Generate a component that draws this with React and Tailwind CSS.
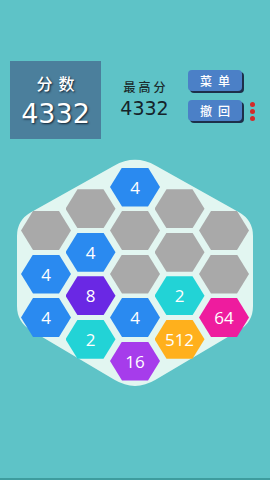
import React from "react";

const COLORS = {
  0: "bg-[#a9a9a9]",
  2: "bg-[#22d3d6]",
  4: "bg-[#2a8af0]",
  8: "bg-[#6a28e4]",
  16: "bg-[#a63ceb]",
  64: "bg-[#ee1c9e]",
  512: "bg-[#ffb01c]",
};

const columns = [
  { pad: "pt-[61px]", ml: "", cells: [0, 4, 4] },
  { pad: "pt-[39.25px]", ml: "-ml-[5.5px]", cells: [0, 4, 8, 2] },
  { pad: "pt-[17.5px]", ml: "-ml-[5.5px]", cells: [4, 0, 0, 4, 16] },
  { pad: "pt-[39.25px]", ml: "-ml-[5.5px]", cells: [0, 0, 2, 512] },
  { pad: "pt-[61px]", ml: "-ml-[5.5px]", cells: [0, 0, 64] },
];

function Hex({ v }) {
  return (
    <div
      className={`w-[50px] h-[39px] flex items-center justify-center text-white text-[17px] font-medium leading-none ${COLORS[v]} [clip-path:polygon(24%_0,76%_0,100%_50%,76%_100%,24%_100%,0_50%)]`}
      style={{ fontFamily: '"Open Sans", sans-serif' }}
    >
      {v ? v : ""}
    </div>
  );
}

export default function App() {
  const cjk = { fontFamily: '"Noto Sans CJK SC", sans-serif' };
  const num = { fontFamily: '"DejaVu Sans", sans-serif' };
  return (
    <div className="w-[270px] h-[480px] bg-[#5ec3c7] flex flex-col relative overflow-hidden">
      {/* header */}
      <div className="flex items-start pt-[61px] pl-[10px]">
        <div className="w-[91px] h-[78px] bg-[#4b7f9c] flex flex-col items-center pt-[12px]">
          <div
            className="text-white text-[16px] leading-[20px] font-medium tracking-[6px] pl-[6px] [text-shadow:1px_1px_2px_#123]"
            style={cjk}
          >
            分数
          </div>
          <div
            className="text-white text-[27px] leading-[32px] mt-[5px] [text-shadow:1px_1px_2px_#123]"
            style={num}
          >
            4332
          </div>
        </div>
        <div className="w-[87px] flex flex-col items-center pt-[18px]">
          <div
            className="text-[#1b2b2c] text-[12px] leading-[16px] font-medium tracking-[3px] pl-[3px]"
            style={cjk}
          >
            最高分
          </div>
          <div className="text-[#15232a] text-[19px] leading-[22px] mt-[2px]" style={num}>
            4332
          </div>
        </div>
        <div className="flex flex-col gap-[9px] pt-[9px]">
          <div
            className="w-[54px] h-[21px] rounded-[4px] bg-[#4b80c7] shadow-[2px_2px_0_#1d2f4a] flex items-center justify-center text-white text-[12px] font-medium tracking-[6px] pl-[6px]"
            style={cjk}
          >
            菜单
          </div>
          <div className="flex items-center">
            <div
              className="w-[54px] h-[21px] rounded-[4px] bg-[#4b80c7] shadow-[2px_2px_0_#1d2f4a] flex items-center justify-center text-white text-[12px] font-medium tracking-[6px] pl-[6px]"
              style={cjk}
            >
              撤回
            </div>
            <div className="flex flex-col gap-[2px] ml-[8px] mt-[2px]">
              <div className="w-[5px] h-[5px] rounded-full bg-[#d42a2a]" />
              <div className="w-[5px] h-[5px] rounded-full bg-[#d42a2a]" />
              <div className="w-[5px] h-[5px] rounded-full bg-[#d42a2a]" />
            </div>
          </div>
        </div>
      </div>

      {/* board */}
      <div className="relative w-[270px] h-[245px] mt-[11px]">
        <svg className="absolute inset-0" width="270" height="245" viewBox="0 0 270 245">
          <path
            d="M114.1 15.7 Q135 4 155.9 15.7 L239 62.2 Q253 70 253 86 L253 156 Q253 172 239.2 180.2 L155.6 229.8 Q135 242 114.4 229.8 L30.8 180.2 Q17 172 17 156 L17 86 Q17 70 31 62.2 Z"
            fill="#e2f6f1"
          />
        </svg>
        <div className="relative flex pl-[21px]">
          {columns.map((c, i) => (
            <div key={i} className={`flex flex-col gap-[4.5px] ${c.pad} ${c.ml}`}>
              {c.cells.map((v, j) => (
                <Hex key={j} v={v} />
              ))}
            </div>
          ))}
        </div>
      </div>

      <div className="absolute bottom-0 left-0 w-full h-[2px] bg-[#3e9c9e]" />
    </div>
  );
}
